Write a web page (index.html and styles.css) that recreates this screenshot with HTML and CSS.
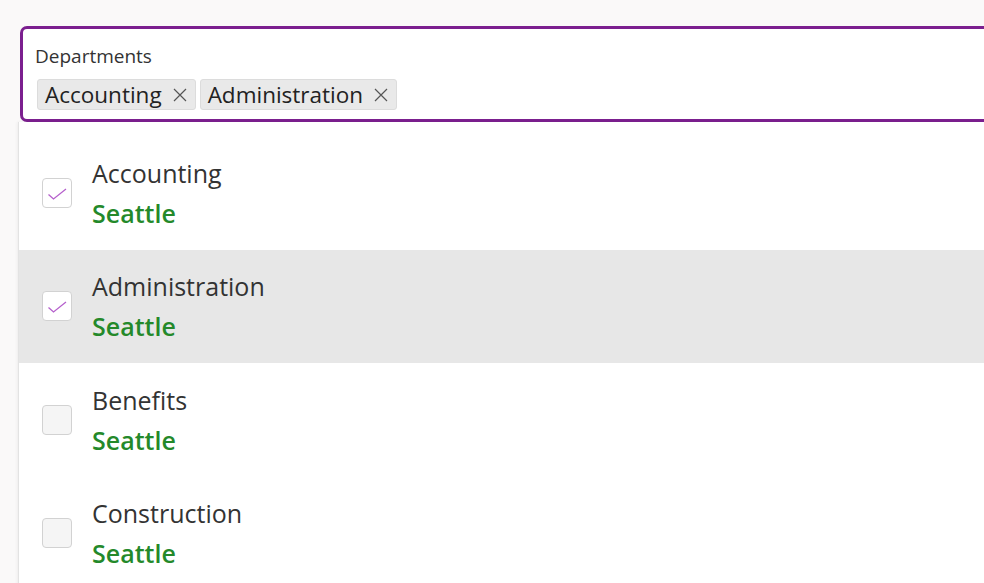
FILE: index.html
```html
<!DOCTYPE html>
<html>
<head>
<meta charset="utf-8">
<link rel="stylesheet" href="styles.css">
</head>
<body>
<div class="page">
  <div class="combo">
    <div class="combo-label">Departments</div>
    <div class="chips">
      <span class="chip">Accounting<svg class="chip-x" viewBox="0 0 16 16"><path d="M2 2L14 14M14 2L2 14"/></svg></span>
      <span class="chip">Administration<svg class="chip-x" viewBox="0 0 16 16"><path d="M2 2L14 14M14 2L2 14"/></svg></span>
    </div>
  </div>
  <div class="panel">
    <div class="row">
      <span class="box checked"><svg viewBox="0 0 24 24"><path d="M3.5 13.5L8.5 18L21 8"/></svg></span>
      <div class="text"><div class="title">Accounting</div><div class="sub">Seattle</div></div>
    </div>
    <div class="row selected">
      <span class="box checked"><svg viewBox="0 0 24 24"><path d="M3.5 13.5L8.5 18L21 8"/></svg></span>
      <div class="text"><div class="title">Administration</div><div class="sub">Seattle</div></div>
    </div>
    <div class="row">
      <span class="box"></span>
      <div class="text"><div class="title">Benefits</div><div class="sub">Seattle</div></div>
    </div>
    <div class="row">
      <span class="box"></span>
      <div class="text"><div class="title">Construction</div><div class="sub">Seattle</div></div>
    </div>
  </div>
</div>
</body>
</html>
```
FILE: styles.css
```css
html, body {
  margin: 0;
  padding: 0;
  background: #faf9f9;
  overflow: hidden;
  height: 583px;
}
.page {
  padding: 26px 0 0 20px;
  font-family: "Open Sans", "Noto Sans", sans-serif;
  color: #333;
  height: 557px;
  overflow: hidden;
}
.combo {
  box-sizing: border-box;
  width: calc(100% + 20px);
  height: 96px;
  border: 3px solid #7b1f8f;
  border-radius: 7px;
  background: #fff;
  padding: 15px 0 0 12px;
}
.combo-label {
  font-size: 19px;
  line-height: 24px;
  color: #333;
}
.chips {
  display: flex;
  gap: 4px;
  margin-top: 11px;
  margin-left: 2px;
}
.chip {
  display: inline-flex;
  align-items: center;
  height: 31px;
  box-sizing: border-box;
  background: #e9e9e9;
  border: 1px solid #dcdcdc;
  border-radius: 3px;
  padding: 0 7px 0 7px;
  font-size: 22.5px;
  color: #222;
}
.chip-x {
  width: 16px;
  height: 16px;
  margin-left: 10px;
  fill: none;
  stroke: #555;
  stroke-width: 1.2;
}
.panel {
  margin-left: -2px;
  background: #fff;
  border-left: 1px solid #e3e3e3;
  box-shadow: -1px 0 3px rgba(0,0,0,0.05);
  padding-top: 14px;
  height: 600px;
}
.row {
  display: flex;
  align-items: center;
  height: 113.5px;
  padding-left: 23px;
}
.row.selected {
  background: #e7e7e7;
}
.box {
  box-sizing: border-box;
  width: 30px;
  height: 30px;
  border: 1.5px solid #d2d2d2;
  border-radius: 4px;
  background: #f5f5f5;
  display: flex;
  align-items: center;
  justify-content: center;
  flex: none;
}
.box.checked {
  background: #fff;
}
.box svg {
  width: 24px;
  height: 24px;
  fill: none;
  stroke: #b560cc;
  stroke-width: 1.3;
}
.text {
  margin-left: 20px;
}
.title {
  font-size: 25px;
  line-height: 40px;
  color: #333;
}
.sub {
  font-size: 25px;
  line-height: 40px;
  font-weight: 600;
  color: #24892a;
}
```
